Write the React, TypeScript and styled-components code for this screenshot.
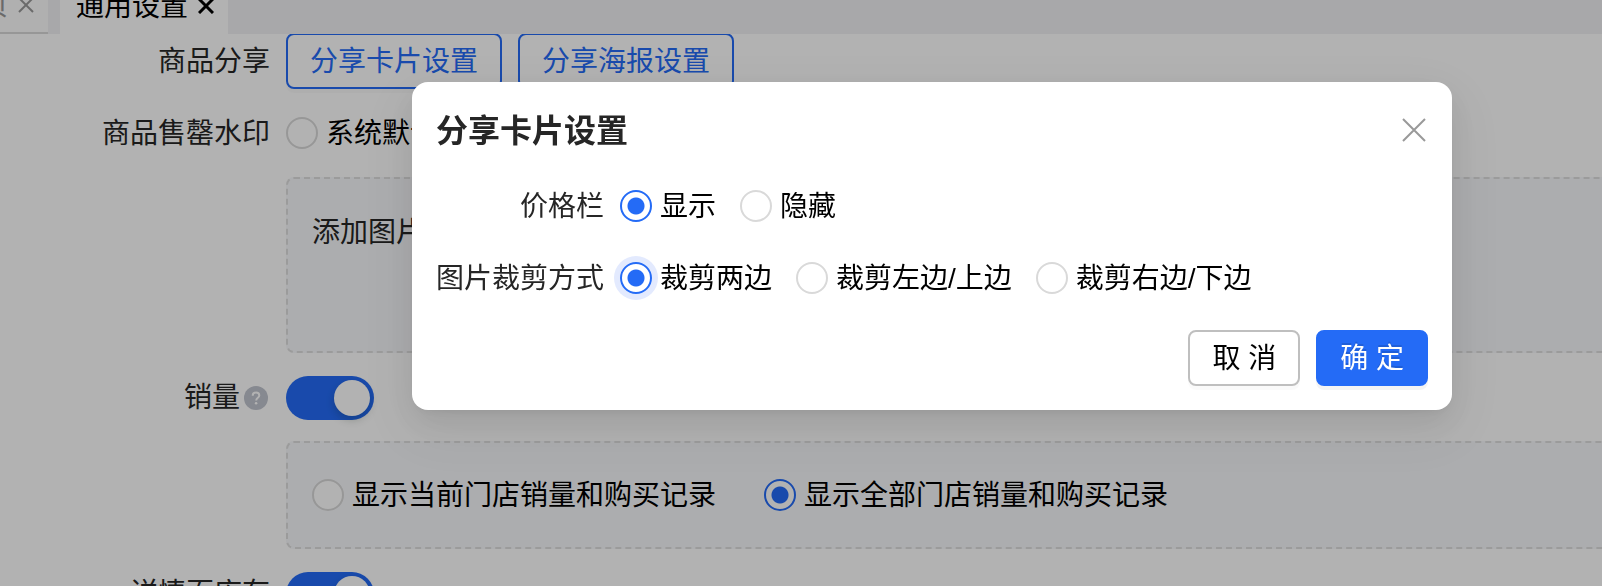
import React, { useState } from 'react';
import styled, { createGlobalStyle, css } from 'styled-components';

const GlobalStyle = createGlobalStyle`
  *, *::before, *::after { box-sizing: border-box; }
  body {
    margin: 0;
    background: #fff;
    color: #000;
    font-family: "Liberation Sans", "Noto Sans CJK SC", sans-serif;
    font-size: 28px;
    line-height: 44px;
  }
  button, input { font: inherit; }
`;

const blue = '#246bf6';

const Page = styled.div`
  height: 100vh;
  overflow: hidden;
`;

const TabBar = styled.nav`
  position: relative;
  z-index: 1;
  display: flex;
  align-items: flex-end;
  gap: 12px;
  height: 34px;
  overflow: hidden;
  background: #f1f1f4;
`;

const Tab = styled.div<{ $active?: boolean }>`
  display: flex;
  flex: none;
  align-items: center;
  justify-content: flex-end;
  gap: 10px;
  height: 56px;
  padding: 0 14px 0 16px;
  white-space: nowrap;
  background: #fff;
  ${({ $active }) =>
    !$active &&
    css`
      width: 48px;
      padding-left: 0;
      color: #999;
      background: #fcfcfc;
      border-bottom: 2px solid #d9d9d9;
    `}
`;

const Caption = styled.span`
  padding-top: 2px;
`;

const IconButton = styled.button`
  display: flex;
  flex: none;
  padding: 0;
  border: 0;
  background: none;
  color: inherit;
  cursor: pointer;
`;

const SettingsForm = styled.form`
  display: flex;
  flex-direction: column;
  gap: 16px;
  margin-top: -1px;
`;

const Row = styled.div<{ $label: number }>`
  display: grid;
  grid-template-columns: ${({ $label }) => $label}px 1fr;
  column-gap: 16px;
`;

const RowLabel = styled.div`
  display: flex;
  align-items: center;
  justify-content: flex-end;
  gap: 2px;
  height: 56px;
  padding-top: 2px;
  color: #262626;
  white-space: nowrap;
`;

const Controls = styled.div<{ $gap?: number }>`
  display: flex;
  align-items: center;
  gap: ${({ $gap = 24 }) => $gap}px;
  height: 56px;
`;

const Button = styled.button<{ $kind?: 'outline' | 'primary' }>`
  height: 56px;
  padding: 2px 22px 0;
  border: 2px solid #bfbfbf;
  border-radius: 8px;
  background: #fff;
  color: #000;
  line-height: 48px;
  white-space: nowrap;
  box-shadow: 0 4px 0 rgba(0, 0, 0, 0.02);
  cursor: pointer;
  ${({ $kind }) =>
    $kind === 'outline' &&
    css`
      border-color: ${blue};
      color: ${blue};
    `}
  ${({ $kind }) =>
    $kind === 'primary' &&
    css`
      border-color: ${blue};
      background: ${blue};
      color: #fff;
      text-shadow: 0 -2px 0 rgba(0, 0, 0, 0.12);
      box-shadow: 0 4px 0 rgba(0, 0, 0, 0.045);
    `}
`;

const Panel = styled.section<{ $tall?: boolean }>`
  height: ${({ $tall }) => ($tall ? 176 : 108)}px;
  margin-left: 286px;
  margin-right: -8px;
  padding: 24px;
  border: 2px dashed #dfdfdf;
  border-radius: 8px;
  background: #f7f8fb;
`;

const PanelText = styled.p`
  margin: 0;
  padding-top: 2px;
  color: #262626;
  line-height: 56px;
`;

const RadioLabel = styled.label`
  display: flex;
  align-items: center;
  gap: 8px;
  white-space: nowrap;
  cursor: pointer;
`;

const RadioInput = styled.input<{ $halo?: boolean }>`
  appearance: none;
  flex: none;
  width: 32px;
  height: 32px;
  margin: 0;
  border: 2px solid #d9d9d9;
  border-radius: 50%;
  background: #fff;
  &:checked {
    border-color: ${blue};
    background: radial-gradient(circle, ${blue} 0 8px, #fff 9px);
    box-shadow: ${({ $halo }) => ($halo ? '0 0 0 6px #e3eafe' : 'none')};
  }
`;

const Switch = styled.input`
  appearance: none;
  display: flex;
  align-items: center;
  width: 88px;
  height: 44px;
  margin: 2px 0 0;
  padding: 0 4px;
  border-radius: 22px;
  background: #bfbfbf;
  cursor: pointer;
  &::before {
    content: '';
    width: 36px;
    height: 36px;
    border-radius: 50%;
    background: #fff;
    box-shadow: 0 4px 8px rgba(0, 35, 11, 0.2);
  }
  &:checked {
    justify-content: flex-end;
    background: ${blue};
  }
`;

const Mask = styled.div`
  position: fixed;
  inset: 0;
  z-index: 2;
  padding: 82px 150px 0 412px;
  background: rgba(0, 0, 0, 0.3);
`;

const Dialog = styled.div`
  display: flex;
  flex-direction: column;
  gap: 24px;
  padding: 24px;
  border-radius: 16px;
  background: #fff;
  box-shadow:
    0 12px 32px rgba(0, 0, 0, 0.08),
    0 6px 12px -8px rgba(0, 0, 0, 0.12),
    0 18px 56px 16px rgba(0, 0, 0, 0.05);
`;

const DialogHeader = styled.header`
  display: flex;
  align-items: center;
  justify-content: space-between;
  height: 48px;
`;

const DialogTitle = styled.h2`
  margin: 0;
  padding-top: 2px;
  color: #262626;
  font-size: 32px;
  font-weight: 600;
  line-height: 48px;
`;

const DialogBody = styled.div`
  display: flex;
  flex-direction: column;
  gap: 16px;
`;

const DialogFooter = styled.footer`
  display: flex;
  justify-content: flex-end;
  gap: 16px;
`;

const CloseButton = styled(IconButton)`
  padding: 2px;
  color: #999;
`;

function Cross({ size, stroke }: { size: number; stroke: number }) {
  const end = size - 1;
  return (
    <svg width={size} height={size} viewBox={`0 0 ${size} ${size}`} aria-hidden="true">
      <path
        d={`M1 1L${end} ${end}M${end} 1L1 ${end}`}
        stroke="currentColor"
        strokeWidth={stroke}
        fill="none"
      />
    </svg>
  );
}

function HelpIcon() {
  return (
    <svg width="28" height="24" viewBox="-2 0 28 24" aria-hidden="true">
      <circle cx="12" cy="12" r="12" fill="#c0c4ce" />
      <path
        d="M8.7 9.8C8.7 7.6 10.1 6.6 12 6.6s3.3 1.1 3.3 2.9c0 2.2-3.1 2.4-3.1 4.9"
        stroke="#fff"
        strokeWidth="2"
        fill="none"
      />
      <circle cx="12.1" cy="17.2" r="1.3" fill="#fff" />
    </svg>
  );
}

type RadioProps = {
  name: string;
  label: string;
  checked: boolean;
  onSelect: () => void;
  halo?: boolean;
};

function Radio({ name, label, checked, onSelect, halo }: RadioProps) {
  return (
    <RadioLabel>
      <RadioInput type="radio" name={name} checked={checked} onChange={onSelect} $halo={halo} />
      <Caption>{label}</Caption>
    </RadioLabel>
  );
}

const cropModes = ['裁剪两边', '裁剪左边/上边', '裁剪右边/下边'];
const priceModes = ['显示', '隐藏'];
const salesModes = ['显示当前门店销量和购买记录', '显示全部门店销量和购买记录'];

export default function App() {
  const [price, setPrice] = useState(0);
  const [crop, setCrop] = useState(0);
  const [sales, setSales] = useState(1);
  const [watermark, setWatermark] = useState(false);

  return (
    <Page>
      <GlobalStyle />
      <TabBar>
        <Tab>
          <Caption>页</Caption>
          <IconButton aria-label="关闭标签">
            <Cross size={16} stroke={2} />
          </IconButton>
        </Tab>
        <Tab $active>
          <Caption>通用设置</Caption>
          <IconButton aria-label="关闭标签">
            <Cross size={16} stroke={3} />
          </IconButton>
        </Tab>
      </TabBar>

      <SettingsForm>
        <Row $label={270}>
          <RowLabel>商品分享</RowLabel>
          <Controls $gap={16}>
            <Button type="button" $kind="outline">分享卡片设置</Button>
            <Button type="button" $kind="outline">分享海报设置</Button>
          </Controls>
        </Row>
        <Row $label={270}>
          <RowLabel>商品售罄水印</RowLabel>
          <Controls>
            <Radio
              name="watermark"
              label="系统默认"
              checked={watermark}
              onSelect={() => setWatermark(true)}
            />
          </Controls>
        </Row>
        <Panel $tall>
          <PanelText>添加图片</PanelText>
        </Panel>
        <Row $label={270}>
          <RowLabel>
            <label htmlFor="sales-switch">销量</label>
            <HelpIcon />
          </RowLabel>
          <Controls>
            <Switch id="sales-switch" type="checkbox" role="switch" defaultChecked />
          </Controls>
        </Row>
        <Panel>
          <Controls $gap={48}>
            {salesModes.map((label, i) => (
              <Radio
                key={label}
                name="sales"
                label={label}
                checked={sales === i}
                onSelect={() => setSales(i)}
              />
            ))}
          </Controls>
        </Panel>
        <Row $label={270}>
          <RowLabel>
            <label htmlFor="stock-switch">详情页库存</label>
          </RowLabel>
          <Controls>
            <Switch id="stock-switch" type="checkbox" role="switch" defaultChecked />
          </Controls>
        </Row>
      </SettingsForm>

      <Mask>
        <Dialog role="dialog" aria-modal="true" aria-labelledby="dialog-title">
          <DialogHeader>
            <DialogTitle id="dialog-title">分享卡片设置</DialogTitle>
            <CloseButton aria-label="关闭">
              <Cross size={24} stroke={2} />
            </CloseButton>
          </DialogHeader>
          <DialogBody>
            <Row $label={168}>
              <RowLabel>价格栏</RowLabel>
              <Controls>
                {priceModes.map((label, i) => (
                  <Radio
                    key={label}
                    name="price"
                    label={label}
                    checked={price === i}
                    onSelect={() => setPrice(i)}
                  />
                ))}
              </Controls>
            </Row>
            <Row $label={168}>
              <RowLabel>图片裁剪方式</RowLabel>
              <Controls>
                {cropModes.map((label, i) => (
                  <Radio
                    key={label}
                    name="crop"
                    label={label}
                    checked={crop === i}
                    onSelect={() => setCrop(i)}
                    halo
                  />
                ))}
              </Controls>
            </Row>
          </DialogBody>
          <DialogFooter>
            <Button type="button">取 消</Button>
            <Button type="button" $kind="primary">确 定</Button>
          </DialogFooter>
        </Dialog>
      </Mask>
    </Page>
  );
}
